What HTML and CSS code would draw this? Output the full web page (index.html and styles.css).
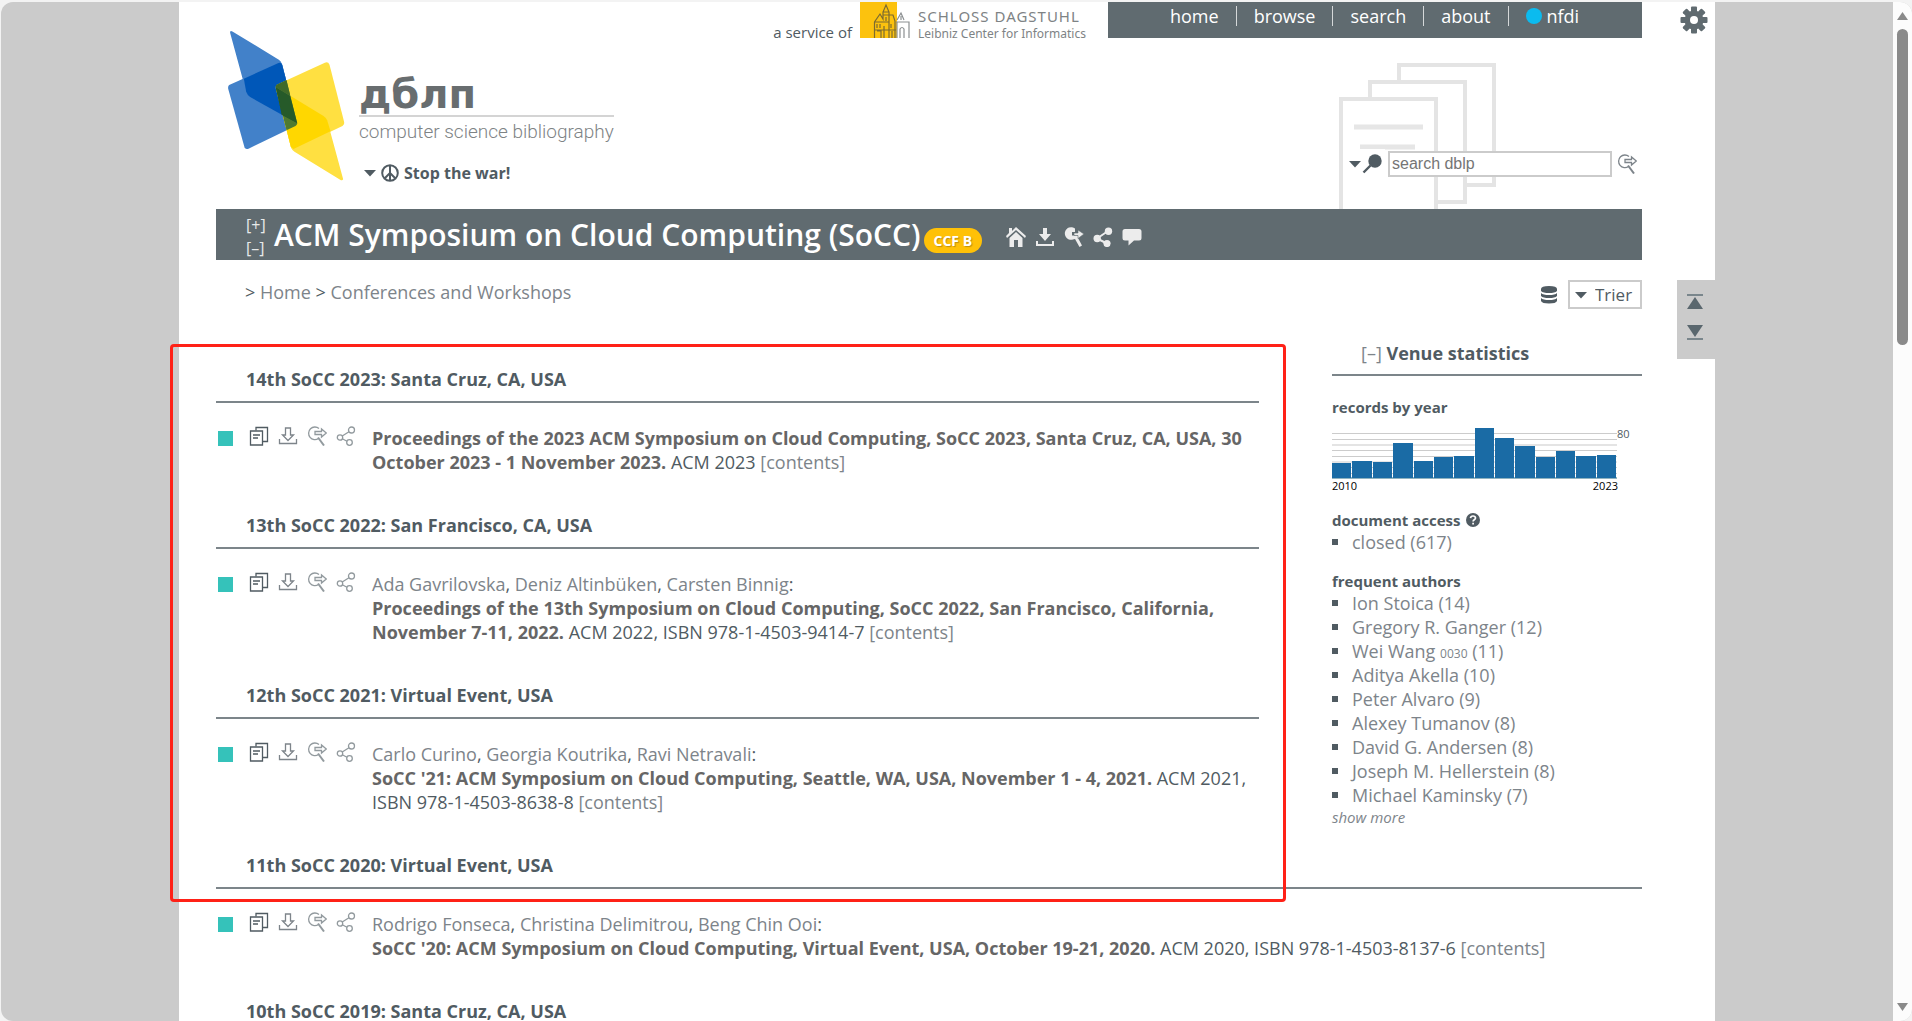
FILE: index.html
```
<!DOCTYPE html>
<html lang="en">
<head>
<meta charset="utf-8">
<title>dblp: ACM Symposium on Cloud Computing (SoCC)</title>
<link rel="stylesheet" href="styles.css">
</head>
<body>
<svg class="defs" aria-hidden="true">
  <symbol id="i-copy" viewBox="0 0 20 20"><g fill="none" stroke="currentColor" stroke-width="1.300"><path d="M7 4.500V1.500H18.500V15.500H13.500"/><path d="M1.500 5H13.500V19H1.500Z"/><path d="M4 9H11M4 12H9"/></g></symbol>
  <symbol id="i-down" viewBox="0 0 20 20"><g fill="none" stroke="currentColor" stroke-width="1.300"><path d="M7.500 2H12.500V9H15.500L10 14.500L4.500 9H7.500Z"/><path d="M1.500 13V17.500H18.500V13"/></g></symbol>
  <symbol id="i-look" viewBox="0 0 20 20"><g fill="none" stroke="currentColor" stroke-width="1.300"><path d="M11.500 12.500A6.300 6.300 0 1 1 12 2.500"/><path d="M8 5.500H14.500V3L19.300 7L14.500 11V8.500H8Z"/><path d="M11 11.500L17 19.500" stroke-width="2"/></g></symbol>
  <symbol id="i-share" viewBox="0 0 20 20"><g fill="none" stroke="currentColor" stroke-width="1.300"><circle cx="4" cy="11.500" r="2.700"/><circle cx="15.500" cy="4" r="3"/><circle cx="13.500" cy="16.500" r="2.800"/><path d="M6.200 10L13 5.700M6.300 12.700L11 15.200"/></g></symbol>
  <symbol id="i-caret" viewBox="0 0 12 8"><path d="M0 1H12L6 7.500Z" fill="currentColor"/></symbol>
</svg>

<div class="viewport">
<div class="page">
  <header class="header">
    <div class="brand">
      <svg class="brand-mark" viewBox="84 92 350 450" role="img" aria-label="dblp logo">
        <path d="M92 92Q95 92 98 94L236 178Q243 183 245 190L292 368Q291 374 284 369L150 290Q141 283 138 274L90 98Q89 93 92 92Z" fill="#4281c9"/>
        <path d="M87 254L235 188Q243 186 246 193L291 369Q291 374 286 377L145 445Q136 449 133 441L84 265Q83 257 87 254Z" fill="#4281c9"/>
        <path d="M131 235L235 188Q243 186 246 193L291 369L150 290Q141 283 138 274Z" fill="#0057b8"/>
        <path d="M230 253L374 187Q384 183 388 193L432 365Q434 373 427 377L283 445Q275 447 272 439L227 265Q225 257 230 253Z" fill="#ffe041"/>
        <path d="M227 260L370 347Q378 352 381 360L429 537Q426 542 420 538L283 454Q276 450 273 443Z" fill="#ffe041"/>
        <path d="M227 260L370 347Q378 352 381 360L391 393L280 446L272 439Z" fill="#ffd700"/>
        <path d="M227 260Q226 255 230 253L259 240L291 369Q291 374 286 377L259 390Z" fill="#4f7a31"/>
        <path d="M227 261L291 368L245 343Z" fill="#265a29"/>
        <path d="M227 261L270 287L291 368L245 343Z" fill="#265a29"/>
        <path d="M227 260Q226 255 230 253L259 240L270 286Z" fill="#406a2a"/>
      </svg>
      <div class="brand-text">
        <div class="brand-name">дблп</div>
        <div class="brand-sub">computer science bibliography</div>
        <a class="peace" href="#">
          <svg class="caret"><use href="#i-caret"/></svg>
          <svg class="peace-icon" viewBox="0 0 18 18"><g fill="none" stroke="currentColor" stroke-width="2"><circle cx="9" cy="9" r="7.800"/><path d="M9 1V17M9 9L3.500 14.500M9 9L14.500 14.500"/></g></svg>
          <b>Stop the war!</b>
        </a>
      </div>
    </div>
    <div class="head-right">
      <div class="topbar">
        <span class="service">a service of</span>
        <a class="dagstuhl" href="#">
          <svg class="castle" viewBox="0 0 50 36"><path d="M0 0H37V36H0Z" fill="#fcc20e"/><g fill="none" stroke="#7b6b31" stroke-width="1.200"><path d="M14.500 36V20L20 12L23 17V10L26 3L29 10V36M14.500 20H29M23 10H29M23 13H33L35 19V36M17 22V26M20 22V26M26 15V19M17 29H21V36M24 24V36M31 22V26M32 29V36M14 28H36"/></g><g fill="none" stroke="#8b8f91" stroke-width="1.200"><path d="M37 18L41 11L44 18M36 20H49V36M41 14V18M40 36V27Q42 24 44 27V36M37 20V36"/></g></svg>
          <span class="dag-text"><span class="dag-top">SCHLOSS DAGSTUHL</span><span class="dag-sub">Leibniz Center for Informatics</span></span>
        </a>
        <nav class="nav">
          <a href="#">home</a><a href="#">browse</a><a href="#">search</a><a href="#">about</a><a href="#"><i class="dot"></i>nfdi</a>
        </nav>
      </div>
      <div class="search-area">
        <svg class="papers" viewBox="0 0 157 146"><g fill="#fff" stroke="#e4e4e4" stroke-width="4"><path d="M60 2H155V122H60Z"/><path d="M31 19H126V139H31Z"/><path d="M2 36H97V160H2Z"/></g><g stroke="#e6e6e6" stroke-width="5"><path d="M15 64H84M21 84H76"/></g></svg>
        <form class="search">
          <span class="search-type"><svg class="caret"><use href="#i-caret"/></svg><svg class="lens" viewBox="0 0 20 20"><circle cx="13" cy="7" r="6.700" fill="currentColor"/><path d="M8.500 11.500L1.500 18.500" stroke="currentColor" stroke-width="2.400"/></svg></span>
          <input class="search-box" type="text" placeholder="search dblp" aria-label="search dblp">
          <button class="look" type="button" aria-label="search in"><svg class="icon"><use href="#i-look"/></svg></button>
        </form>
      </div>
    </div>
  </header>

  <div class="banner">
    <div class="toggles"><a href="#">[+]</a><a href="#">[–]</a></div>
    <h1>ACM Symposium on Cloud Computing (SoCC)</h1>
    <span class="badge">CCF B</span>
    <div class="banner-icons">
      <svg viewBox="0 0 20 20"><path d="M10 0L20 9L19 11L10 3L1 11L0 9L3 6V1H6V4ZM3.500 11L10 5L16.500 11V20H12V13H8V20H3.500Z" fill="currentColor"/></svg>
      <svg viewBox="0 0 20 20"><path d="M8 1H12V7H16L10 14L4 7H8ZM1 14H3V17H17V14H19V19H1Z" fill="currentColor"/></svg>
      <svg viewBox="0 0 20 20"><path d="M11 1.500A6.300 6.300 0 1 0 9 12.500L11 12L15.500 20L18 18.500L14 11V8.500H8V5H11Z" fill="currentColor"/><path d="M10 6H14V3L20 7L14 11.500V8.500H10Z" fill="currentColor" stroke="#606b70" stroke-width=".6"/></svg>
      <svg viewBox="0 0 20 20"><g fill="currentColor"><circle cx="4.200" cy="11.500" r="3.700"/><circle cx="15.500" cy="4.300" r="3.700"/><circle cx="14" cy="16.500" r="3.600"/></g><path d="M15 4L4 11.500L14 16.500" fill="none" stroke="currentColor" stroke-width="2"/></svg>
      <svg viewBox="0 0 20 20"><path d="M3 2H17Q19.500 2 19.500 4.500V11Q19.500 13.500 17 13.500H12L6.500 18.500V13.500H3Q.5 13.500 .5 11V4.500Q.5 2 3 2Z" fill="currentColor"/></svg>
    </div>
  </div>

  <div class="crumb-row">
    <div class="crumbs">&gt; <a href="#">Home</a> &gt; <a href="#">Conferences and Workshops</a></div>
    <div class="mirror">
      <svg class="db" viewBox="0 0 16 18"><g fill="#505b62"><path d="M0 3Q0 0 8 0T16 3V5Q14 7 8 7T0 5Z"/><path d="M0 7Q2 9 8 9T16 7V10Q14 12 8 12T0 10Z"/><path d="M0 12Q2 14 8 14T16 12V15Q15 17.500 8 17.500T0 15Z"/></g></svg>
      <label class="select"><svg class="caret"><use href="#i-caret"/></svg><select aria-label="mirror"><option>Trier</option></select></label>
    </div>
  </div>

  <div class="columns">
    <main>
      <section class="year">
        <h2>14th SoCC 2023: Santa Cruz, CA, USA</h2>
        <article class="entry">
          <span class="box"></span>
          <div class="icons"><svg class="icon dark"><use href="#i-copy"/></svg><svg class="icon"><use href="#i-down"/></svg><svg class="icon light"><use href="#i-look"/></svg><svg class="icon light"><use href="#i-share"/></svg></div>
          <p><b>Proceedings of the 2023 ACM Symposium on Cloud Computing, SoCC 2023, Santa Cruz, CA, USA, 30 October 2023 - 1 November 2023.</b> ACM 2023 <a href="#">[contents]</a></p>
        </article>
      </section>
      <section class="year">
        <h2>13th SoCC 2022: San Francisco, CA, USA</h2>
        <article class="entry">
          <span class="box"></span>
          <div class="icons"><svg class="icon dark"><use href="#i-copy"/></svg><svg class="icon"><use href="#i-down"/></svg><svg class="icon light"><use href="#i-look"/></svg><svg class="icon light"><use href="#i-share"/></svg></div>
          <p><a href="#">Ada Gavrilovska</a>, <a href="#">Deniz Altinbüken</a>, <a href="#">Carsten Binnig</a>:<br><b>Proceedings of the 13th Symposium on Cloud Computing, SoCC 2022, San Francisco, California, November 7-11, 2022.</b> ACM 2022, ISBN 978-1-4503-9414-7 <a href="#">[contents]</a></p>
        </article>
      </section>
      <section class="year">
        <h2>12th SoCC 2021: Virtual Event, USA</h2>
        <article class="entry">
          <span class="box"></span>
          <div class="icons"><svg class="icon dark"><use href="#i-copy"/></svg><svg class="icon"><use href="#i-down"/></svg><svg class="icon light"><use href="#i-look"/></svg><svg class="icon light"><use href="#i-share"/></svg></div>
          <p><a href="#">Carlo Curino</a>, <a href="#">Georgia Koutrika</a>, <a href="#">Ravi Netravali</a>:<br><b>SoCC '21: ACM Symposium on Cloud Computing, Seattle, WA, USA, November 1 - 4, 2021.</b> ACM 2021, ISBN 978-1-4503-8638-8 <a href="#">[contents]</a></p>
        </article>
      </section>
    </main>

    <aside class="stats">
      <h2><a href="#">[–]</a> Venue statistics</h2>
      <h3>records by year</h3>
      <svg class="chart" viewBox="0 0 304 52" role="img" aria-label="records by year, 2010 to 2023">
        <g stroke="#ccc"><path d="M0 5.500H285M0 11.500H285M0 22.500H285M0 28.500H285M0 34H285M0 39.500H285M0 45.500H285"/><path d="M0 17H285" stroke="#e4e4e4" stroke-width="2"/></g>
        <path d="M0 50H285" stroke="#8fb3c0" stroke-width="2"/>
        <g fill="#1a6ba5">
          <rect x="0" y="35" width="19" height="15"/><rect x="20" y="33" width="20" height="17"/><rect x="41" y="34" width="19" height="16"/><rect x="61" y="15" width="20" height="35"/><rect x="82" y="33" width="19" height="17"/><rect x="102" y="29" width="19" height="21"/><rect x="122" y="28" width="20" height="22"/><rect x="143" y="0" width="19" height="50"/><rect x="163" y="10" width="19" height="40"/><rect x="183" y="18" width="20" height="32"/><rect x="204" y="29" width="19" height="21"/><rect x="224" y="23" width="19" height="27"/><rect x="244" y="28" width="20" height="22"/><rect x="265" y="27" width="19" height="23"/>
        </g>
        <text x="285" y="10" class="axis-max">80</text>
      </svg>
      <div class="axis"><span>2010</span><span>2023</span></div>
      <h3>document access <svg class="help" viewBox="0 0 14 14"><circle cx="7" cy="7" r="7" fill="#505b62"/><path d="M4.500 5.200Q4.700 3 7 3T9.500 5Q9.500 6 8.300 6.700T7.100 8.500M7.100 9.700V11.500" fill="none" stroke="#fff" stroke-width="1.700"/></svg></h3>
      <ul>
        <li><a href="#">closed (617)</a></li>
      </ul>
      <h3>frequent authors</h3>
      <ul>
        <li><a href="#">Ion Stoica (14)</a></li>
        <li><a href="#">Gregory R. Ganger (12)</a></li>
        <li><a href="#">Wei Wang <small>0030</small> (11)</a></li>
        <li><a href="#">Aditya Akella (10)</a></li>
        <li><a href="#">Peter Alvaro (9)</a></li>
        <li><a href="#">Alexey Tumanov (8)</a></li>
        <li><a href="#">David G. Andersen (8)</a></li>
        <li><a href="#">Joseph M. Hellerstein (8)</a></li>
        <li><a href="#">Michael Kaminsky (7)</a></li>
      </ul>
      <a class="more" href="#">show more</a>
    </aside>
  </div>

  <section class="year">
    <h2>11th SoCC 2020: Virtual Event, USA</h2>
    <article class="entry">
      <span class="box"></span>
      <div class="icons"><svg class="icon dark"><use href="#i-copy"/></svg><svg class="icon"><use href="#i-down"/></svg><svg class="icon light"><use href="#i-look"/></svg><svg class="icon light"><use href="#i-share"/></svg></div>
      <p><a href="#">Rodrigo Fonseca</a>, <a href="#">Christina Delimitrou</a>, <a href="#">Beng Chin Ooi</a>:<br><b>SoCC '20: ACM Symposium on Cloud Computing, Virtual Event, USA, October 19-21, 2020.</b> ACM 2020, ISBN 978-1-4503-8137-6 <a href="#">[contents]</a></p>
    </article>
  </section>
  <section class="year">
    <h2>10th SoCC 2019: Santa Cruz, CA, USA</h2>
  </section>

  <button class="gear" type="button" aria-label="settings"><svg viewBox="-14 -14 28 28"><g fill="#606b70"><circle r="9.500"/><g id="teeth"><rect x="-3" y="-13.500" width="6" height="27" rx="1"/><rect x="-13.500" y="-3" width="27" height="6" rx="1"/></g><use href="#teeth" transform="rotate(45)"/></g><circle r="4" fill="#fff"/></svg></button>
  <div class="jump">
    <a href="#" aria-label="top"><svg viewBox="0 0 16 15"><path d="M0 0H16V2H0Z" fill="#7a868c"/><path d="M8 3L16 15H0Z" fill="#5a676e"/></svg></a>
    <a href="#" aria-label="bottom"><svg viewBox="0 0 16 15"><path d="M0 13H16V15H0Z" fill="#7a868c"/><path d="M0 0H16L8 12Z" fill="#5a676e"/></svg></a>
  </div>
  <div class="marker"></div>
</div>
<div class="scrollbar">
  <svg class="arrow" viewBox="0 0 11 8"><path d="M5.500 0L11 8H0Z" fill="#8a8a8a"/></svg>
  <div class="thumb"></div>
  <svg class="arrow" viewBox="0 0 11 8"><path d="M0 0H11L5.500 8Z" fill="#8a8a8a"/></svg>
</div>
</div>
</body>
</html>
```
FILE: styles.css
```
* { box-sizing: border-box; }
body {
  margin: 0;
  padding: 2px 0 0 1px;
  background: #f3f3f3;
  color: #505b62;
  font: 18px/24px "Open Sans", sans-serif;
}
a { color: #7d848a; text-decoration: none; }
h1, h2, h3, p, ul { margin: 0; padding: 0; }
svg { display: block; flex: none; }
button { padding: 0; border: 0; background: none; }
.defs { position: absolute; width: 0; height: 0; }

.viewport {
  display: flex;
  height: calc(100vh - 2px);
  overflow: hidden;
  border-radius: 12px;
  background: #cbcbcb;
}
.page {
  position: relative;
  flex: 0 1 1536px;
  min-height: 100%;
  margin: 0 auto;
  padding: 0 73px 0 37px;
  background: #fff;
}
.scrollbar {
  display: flex;
  flex: none;
  flex-direction: column;
  align-items: center;
  width: 19px;
  padding: 10px 0 10px;
  background: #fcfcfc;
}
.arrow { width: 11px; height: 8px; }
.thumb {
  width: 11px;
  height: 316px;
  margin: 9px 0 auto;
  border-radius: 6px;
  background: #8a8a8a;
}

.header { display: flex; justify-content: space-between; height: 207px; }
.brand { display: flex; gap: 14px; padding: 29px 0 0 12px; }
.brand-mark { width: 117px; height: 150px; }
.brand-text { padding-top: 42px; }
.brand-name {
  color: #686d6f;
  font: bold 40px/42px "DejaVu Sans", sans-serif;
  border-bottom: 2px solid #d4d4d4;
}
.brand-sub { color: #7e8385; font: 300 19px/30px Roboto, sans-serif; }
.peace {
  display: flex;
  align-items: center;
  gap: 5px;
  padding: 14px 0 0 5px;
  color: #505b62;
  font-size: 16px;
}
.caret { width: 12px; height: 8px; color: #505b62; }
.peace-icon { width: 18px; height: 18px; }

.topbar { display: flex; justify-content: flex-end; height: 36px; }
.service { padding: 18px 8px 0 0; font-size: 15px; }
.dagstuhl { display: flex; gap: 8px; margin-right: 24px; color: #7e8385; }
.castle { width: 50px; height: 36px; }
.dag-text { width: 166px; white-space: nowrap; font-family: "Noto Sans", sans-serif; }
.dag-top { display: block; padding-top: 5px; font-size: 15px; line-height: 18px; letter-spacing: 1px; }
.dag-sub { display: block; font-size: 12px; line-height: 18px; }
.nav {
  display: flex;
  align-items: flex-start;
  width: 534px;
  padding: 4px 0 0 45px;
  background: #606b70;
  line-height: 20px;
}
.nav a { display: flex; align-items: center; padding: 0 17px; color: #fff; }
.nav a + a { border-left: 1px solid #d5d8d9; }
.dot { width: 16px; height: 16px; margin-right: 5px; border-radius: 50%; background: #0bbbef; }

.search-area { display: grid; height: 171px; margin-left: auto; width: 303px; }
.search-area > * { grid-area: 1 / 1; }
.papers { width: 157px; height: 146px; margin-top: 25px; }
.search { display: flex; align-items: center; align-self: start; margin: 111px 0 0 4px; }
.search-type {
  display: flex;
  align-items: center;
  gap: 1px;
  height: 29px;
  width: 45px;
  padding-left: 6px;
  background: linear-gradient(90deg, #fff 42px, transparent 42px);
  color: #505b62;
}
.lens { width: 20px; height: 20px; }
.search-box {
  width: 224px;
  height: 26px;
  padding: 0 2px;
  border: 2px solid #cbcbcb;
  background: #fff;
  font: 16px "Liberation Sans", sans-serif;
}
.look { margin-left: 5px; color: #7d848a; }

.banner { display: flex; align-items: center; height: 51px; padding-left: 30px; background: #606b70; }
.toggles { display: flex; flex-direction: column; width: 28px; padding-top: 4px; font-size: 16px; line-height: 23px; }
.toggles a { color: #e8eaea; }
h1 { color: #fff; font-size: 30px; font-weight: 600; line-height: 40px; }
.badge {
  margin: 12px 24px 0 3px;
  padding: 0 10px;
  border-radius: 13px;
  background: #ffc107;
  color: #fff;
  font-size: 14px;
  font-weight: 700;
  line-height: 25px;
  text-shadow: 1px 1px 1px #c09010;
}
.banner-icons { display: flex; gap: 9px; padding-top: 5px; color: #ececec; }
.banner-icons svg { width: 20px; height: 20px; }

.crumb-row { display: flex; justify-content: space-between; padding: 20px 0 0 29px; height: 81px; }
.mirror { display: flex; align-items: center; gap: 11px; height: 29px; }
.db { width: 16px; height: 18px; }
.select { display: flex; align-items: center; width: 74px; height: 29px; padding-left: 5px; border: 2px solid #cbcbcb; }
select {
  flex: 1;
  padding: 0 0 0 8px;
  border: 0;
  background: none;
  color: #505b62;
  font: 17px/24px "Open Sans", sans-serif;
  appearance: none;
}

.columns { display: grid; grid-template-columns: 1fr 310px; column-gap: 73px; align-items: start; }
main { padding-top: 26px; }
h2 { border-bottom: 2px solid #7c858a; font-size: 18px; line-height: 24px; font-weight: 700; }
.year h2 { padding: 0 0 10px 30px; }
.entry { display: flex; padding: 23px 0 39px; }
.box { flex: none; width: 15px; height: 15px; margin: 5px 16px 0 2px; background: #35c2ba; }
.icons { display: flex; flex: none; gap: 9px; width: 123px; }
.icon { width: 20px; height: 20px; color: #7d848a; }
.dark { color: #505b62; }
.light { color: #929a9e; }
.entry b { color: #666; }

.stats h2 { padding: 0 0 9px 29px; }
.stats h2 a { font-weight: 400; }
h3 { display: flex; align-items: center; gap: 6px; font-size: 15px; line-height: 20px; font-weight: 700; }
.stats h2 + h3 { margin: 21px 0 11px; }
.chart { width: 304px; height: 52px; }
.axis-max { fill: #505b62; font-size: 11px; }
.axis { display: flex; justify-content: space-between; width: 286px; margin-bottom: 18px; color: #000; font-size: 11px; line-height: 12px; }
.help { width: 14px; height: 14px; }
ul { margin-bottom: 17px; list-style: none; }
li { display: flex; align-items: center; gap: 14px; height: 24px; }
li::before { content: ""; width: 6px; height: 6px; background: #505b62; }
small { font-size: 12px; line-height: 12px; }
ul:last-of-type { margin: 0; }
.more { display: block; font-size: 15px; font-style: italic; line-height: 20px; }

.gear { position: absolute; top: 4px; right: 7px; width: 28px; height: 28px; }
.jump {
  position: absolute;
  top: 278px;
  right: 0;
  display: flex;
  flex-direction: column;
  gap: 16px;
  width: 38px;
  height: 79px;
  padding: 14px 12px 14px 10px;
  background: #cbcbcb;
}
.jump svg { width: 16px; height: 15px; }
.marker {
  position: absolute;
  top: 342px;
  left: -9px;
  width: 1116px;
  height: 558px;
  border: 3px solid #ff2117;
  border-radius: 4px;
}
```
